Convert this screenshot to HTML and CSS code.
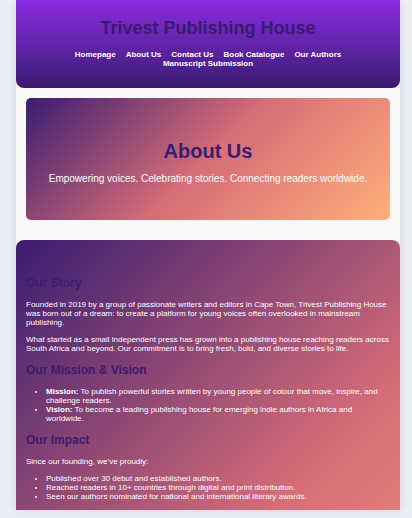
FILE: index.html
```html
<!DOCTYPE html>
<html lang="en">
<head>
<meta charset="utf-8">
<meta name="viewport" content="width=device-width, initial-scale=1">
<title>About Us - Trivest Publishing House</title>
<link rel="stylesheet" href="styles.css">
</head>
<body>
<div class="page">
  <header class="site-header">
    <h1 class="site-title">Trivest Publishing House</h1>
    <nav class="site-nav">
      <a href="#home">Homepage</a>
      <a href="#about">About Us</a>
      <a href="#contact">Contact Us</a>
      <a href="#catalogue">Book Catalogue</a>
      <a href="#authors">Our Authors</a>
      <a href="#submission">Manuscript Submission</a>
    </nav>
  </header>
  <section class="hero" id="about">
    <h2 class="hero-title">About Us</h2>
    <p class="hero-text">Empowering voices. Celebrating stories. Connecting readers worldwide.</p>
  </section>
  <main class="content">
    <h2>Our Story</h2>
    <p>Founded in 2019 by a group of passionate writers and editors in Cape Town, Trivest Publishing House was born out of a dream: to create a platform for young voices often overlooked in mainstream publishing.</p>
    <p>What started as a small independent press has grown into a publishing house reaching readers across South Africa and beyond. Our commitment is to bring fresh, bold, and diverse stories to life.</p>
    <h2>Our Mission &amp; Vision</h2>
    <ul>
      <li><strong>Mission:</strong> To publish powerful stories written by young people of colour that move, inspire, and challenge readers.</li>
      <li><strong>Vision:</strong> To become a leading publishing house for emerging indie authors in Africa and worldwide.</li>
    </ul>
    <h2>Our Impact</h2>
    <p>Since our founding, we’ve proudly:</p>
    <ul>
      <li>Published over 30 debut and established authors.</li>
      <li>Reached readers in 10+ countries through digital and print distribution.</li>
      <li>Seen our authors nominated for national and international literary awards.</li>
    </ul>
  </main>
</div>
</body>
</html>
```
FILE: styles.css
```css
* {
  box-sizing: border-box;
}

body {
  margin: 0;
  background: #e9eef7;
  color: #fff;
  font: 8px/9px "Liberation Sans", Arial, sans-serif;
}

.page {
  margin: 0 12px 8px 16px;
  background: #f9f9f9;
  box-shadow: 0 0 10px rgba(0, 0, 0, 0.1);
}

h1,
h2,
p,
ul {
  margin: 0;
}

.site-header {
  padding: 18px 10px 20px;
  border-radius: 0 0 8px 8px;
  background: linear-gradient(#8a2be2, #3a1c71);
  text-align: center;
}

.site-title {
  color: #3a1c71;
  font-size: 18px;
  line-height: 20px;
}

.site-nav {
  display: flex;
  flex-wrap: wrap;
  justify-content: center;
  column-gap: 10px;
  margin: 12px 40px 0;
}

.site-nav a {
  color: #fff;
  font-weight: bold;
  text-decoration: none;
}

.hero {
  margin: 10px 10px 20px;
  padding: 40px 20px 36px;
  border-radius: 5px;
  background: linear-gradient(135deg, #3a1c71, #d76d77, #ffaf7b);
  text-align: center;
}

.hero-title {
  color: #3a1c71;
  font-size: 20px;
  line-height: 26px;
}

.hero-text {
  margin-top: 10px;
  font-size: 10px;
  line-height: 10px;
}

.content {
  padding: 36px 10px 9px;
  border-radius: 8px 8px 0 0;
  background: linear-gradient(135deg, #3a1c71, #d76d77, #ffaf7b) no-repeat;
  background-size: 100% 670px;
}

.content h2 {
  margin-bottom: 10px;
  color: #3a1c71;
  font-size: 12px;
  line-height: 14px;
}

.content p {
  margin-bottom: 8px;
}

.content ul {
  padding-left: 20px;
}

.content p + h2,
.content ul + h2 {
  margin-top: 10px;
}
```
